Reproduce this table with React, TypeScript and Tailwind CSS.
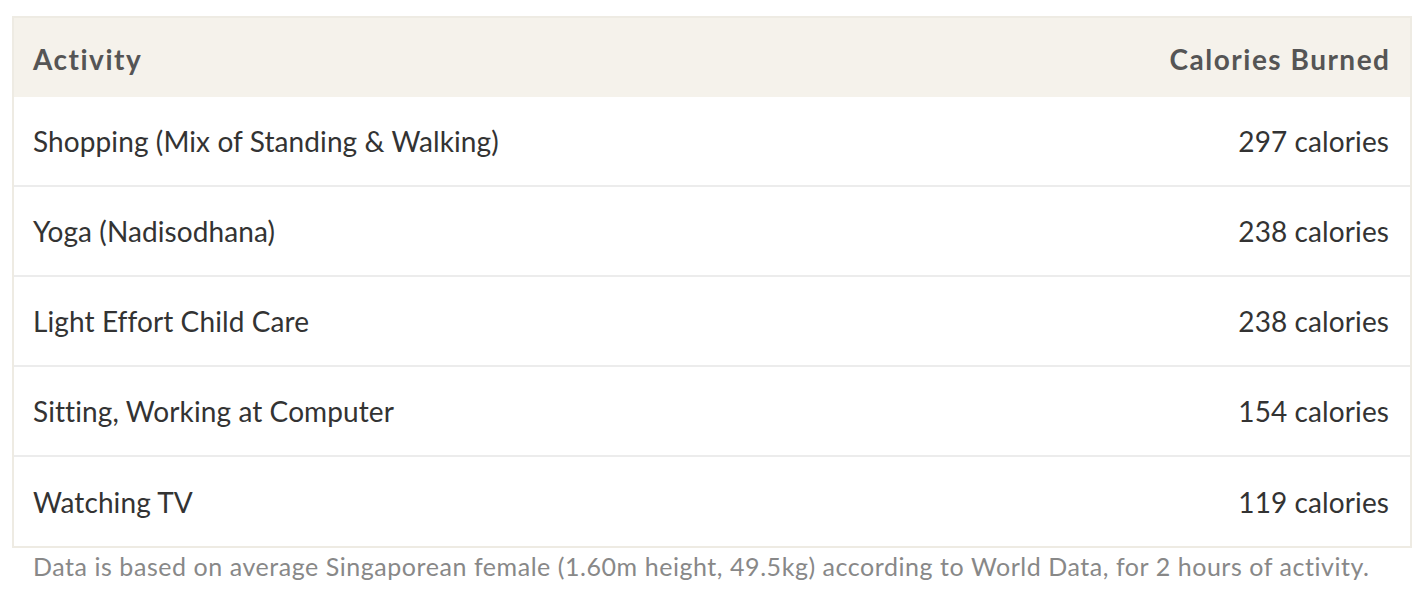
import React from "react";

const rows: [string, string][] = [
  ["Shopping (Mix of Standing & Walking)", "297 calories"],
  ["Yoga (Nadisodhana)", "238 calories"],
  ["Light Effort Child Care", "238 calories"],
  ["Sitting, Working at Computer", "154 calories"],
  ["Watching TV", "119 calories"],
];

export default function App() {
  return (
    <div
      className="w-[1424px] h-[592px] bg-white pt-[16px] pl-[12px]"
      style={{ fontFamily: "Lato, 'Liberation Sans', sans-serif" }}
    >
      <div className="w-[1400px] border-2 border-[#eeebe3]">
        <div className="h-[79px] bg-[#f5f2eb] flex items-center justify-between pl-[19px] pr-[21px] pt-[3px] text-[28px] font-bold tracking-[1.5px] text-[#555555]">
          <span>Activity</span>
          <span className="mr-[-1.5px]">Calories Burned</span>
        </div>
        {rows.map(([a, c], i) => (
          <div
            key={a}
            className={
              i < rows.length - 1
                ? "h-[90px] border-b-2 border-[#ececec] flex items-center justify-between pl-[19px] pr-[21px] text-[28px] tracking-[0.1px] text-[#333333]"
                : "h-[89px] flex items-center justify-between pl-[19px] pr-[21px] text-[28px] tracking-[0.1px] text-[#333333]"
            }
          >
            <span>{a}</span>
            <span>{c}</span>
          </div>
        ))}
      </div>
      <div className="pl-[21px] pt-[3px] text-[25px] leading-[30px] tracking-[0.55px] text-[#888888]">
        Data is based on average Singaporean female (1.60m height, 49.5kg) according to World Data, for 2 hours of activity.
      </div>
    </div>
  );
}
